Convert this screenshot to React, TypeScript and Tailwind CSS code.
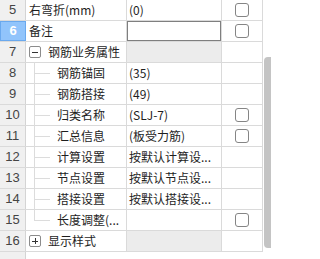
const rows = [
  { no: 5, name: "右弯折(mm)", value: "(0)", check: true },
  { no: 6, name: "备注", value: "", check: true, editing: true },
  { no: 7, name: "钢筋业务属性", group: "minus" },
  { no: 8, name: "钢筋锚固", value: "(35)", child: true },
  { no: 9, name: "钢筋搭接", value: "(49)", child: true },
  { no: 10, name: "归类名称", value: "(SLJ-7)", check: true, child: true },
  { no: 11, name: "汇总信息", value: "(板受力筋)", check: true, child: true },
  { no: 12, name: "计算设置", value: "按默认计算设...", child: true },
  { no: 13, name: "节点设置", value: "按默认节点设...", child: true },
  { no: 14, name: "搭接设置", value: "按默认搭接设...", child: true },
  { no: 15, name: "长度调整(...", value: "", check: true, child: true, last: true },
  { no: 16, name: "显示样式", group: "plus" },
];

const TreeBox = ({ plus }: { plus?: boolean }) => (
  <div className="relative w-[12px] h-[12px] border border-[#8c8c8c] rounded-[2px] bg-white shrink-0">
    <div className="absolute left-[2px] right-[2px] top-[4.5px] h-[1px] bg-[#333]" />
    {plus && <div className="absolute top-[2px] bottom-[2px] left-[4.5px] w-[1px] bg-[#333]" />}
  </div>
);

export default function App() {
  return (
    <div
      className="w-[271px] h-[259px] bg-white flex overflow-hidden text-[12px] text-[#1e1e1e]"
      style={{ fontFamily: '"Noto Sans CJK SC", "Liberation Sans", sans-serif' }}
    >
      <div className="w-[263px] flex flex-col">
        {rows.map((r) => (
          <div key={r.no} className="flex h-[21px] border-b border-[#dadada]">
            {/* row number */}
            <div
              className={
                r.editing
                  ? "w-[26px] shrink-0 flex items-center justify-center bg-[#91c4fb] border border-[#6aa9ee] text-white font-bold text-[13px]"
                  : "w-[26px] shrink-0 flex items-center justify-center bg-[#f0f0f0] border-r border-[#d4d4d4] text-[#444] text-[13px]"
              }
              style={{ fontFamily: '"Liberation Sans", sans-serif' }}
            >
              {r.no}
            </div>
            {/* name */}
            <div className="relative w-[101px] shrink-0 flex items-center border-r border-[#dadada] leading-none">
              {r.group ? (
                <div className="flex items-center pl-[3px] gap-[7px]">
                  <TreeBox plus={r.group === "plus"} />
                  <span>{r.name}</span>
                </div>
              ) : r.child ? (
                <>
                  <div
                    className={
                      r.last
                        ? "absolute left-[8px] top-[-1px] h-[11px] w-[1px] bg-[#dcdcdc]"
                        : "absolute left-[8px] top-[-1px] bottom-[-1px] w-[1px] bg-[#dcdcdc]"
                    }
                  />
                  <div className="absolute left-[8px] top-[10px] w-[16px] h-[1px] bg-[#dcdcdc]" />
                  <span className="pl-[31px] whitespace-nowrap">{r.name}</span>
                </>
              ) : (
                <span className="pl-[3px] whitespace-nowrap">{r.name}</span>
              )}
            </div>
            {/* value */}
            <div
              className={
                r.group
                  ? "relative w-[95px] shrink-0 bg-[#ececec] border-r border-[#dadada]"
                  : "relative w-[95px] shrink-0 flex items-center pl-[2px] border-r border-[#dadada] whitespace-nowrap overflow-hidden leading-none"
              }
            >
              {r.value}
              {r.editing && (
                <div className="absolute left-[-1px] right-[-1px] top-[-1px] bottom-[-1px] border-2 border-[#7f7f7f]" />
              )}
            </div>
            {/* checkbox */}
            <div className="w-[41px] shrink-0 flex items-center justify-center border-r border-[#dadada]">
              {r.check && (
                <div className="w-[14px] h-[14px] border border-[#858585] rounded-[3px] bg-white" />
              )}
            </div>
          </div>
        ))}
        <div className="flex-1 w-[26px] bg-[#f0f0f0] border-r border-[#d4d4d4]" />
      </div>
      {/* scrollbar */}
      <div className="flex-1 pl-[1px] pt-[57px] pb-[11px] flex">
        <div className="flex-1 bg-[#c4c4c4] rounded-l-[4px]" />
      </div>
    </div>
  );
}
